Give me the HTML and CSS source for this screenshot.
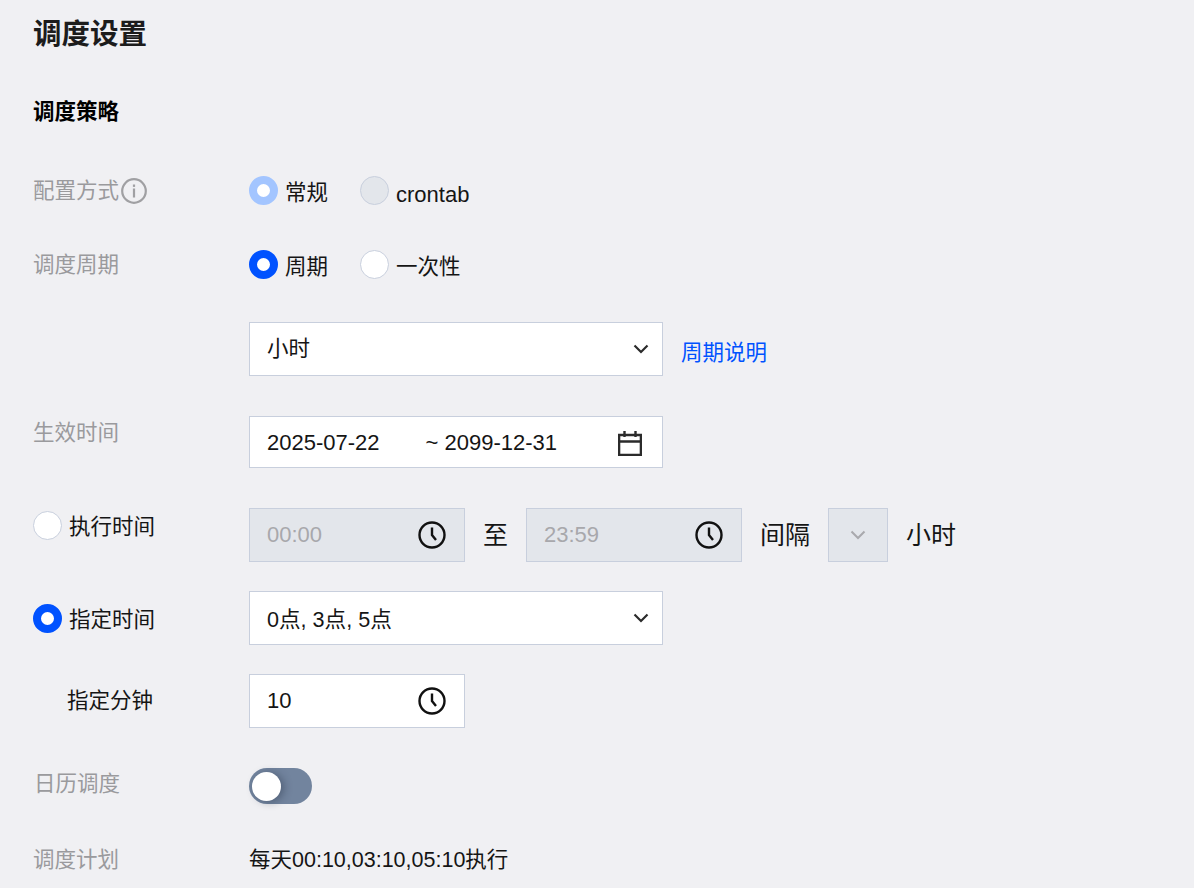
FILE: index.html
```html
<!DOCTYPE html>
<html lang="zh-CN">
<head>
<meta charset="utf-8">
<title>调度设置</title>
<link rel="stylesheet" href="styles.css">
</head>
<body>
<main class="page">
  <h1 class="title">调度设置</h1>
  <h2 class="section">调度策略</h2>

  <div class="row row-config">
    <div class="label muted">配置方式<svg class="info" width="26" height="26" viewBox="0 0 26 26"><circle cx="13" cy="13" r="11.8" fill="none" stroke="#a0a0a3" stroke-width="2.2"/><rect x="11.9" y="6.5" width="2.2" height="2.4" fill="#a0a0a3"/><rect x="11.9" y="10.5" width="2.2" height="9" fill="#a0a0a3"/></svg></div>
    <div class="radios">
      <span class="radio"><i class="dot dot-on-disabled"></i><span class="radio-text">常规</span></span>
      <span class="radio"><i class="dot dot-off-disabled"></i><span class="radio-text latin-low">crontab</span></span>
    </div>
  </div>

  <div class="row row-cycle">
    <div class="label muted">调度周期</div>
    <div class="radios">
      <span class="radio"><i class="dot dot-on"></i><span class="radio-text">周期</span></span>
      <span class="radio"><i class="dot dot-off"></i><span class="radio-text">一次性</span></span>
    </div>
  </div>

  <div class="row row-select">
    <div class="label"></div>
    <div class="field wide tall"><span class="text-up">小时</span><svg class="chev" width="16" height="10" viewBox="0 0 16 10"><path d="M1.5 1.5 8 8l6.5-6.5" fill="none" stroke="#2b2b2b" stroke-width="2.2"/></svg></div>
    <a class="link">周期说明</a>
  </div>

  <div class="row row-date">
    <div class="label muted">生效时间</div>
    <div class="field wide short">
      <span class="num date-from">2025-07-22</span><span class="num">~ 2099-12-31</span>
      <svg class="cal" width="24" height="26" viewBox="0 0 24 26"><path d="M1.100 5h21.800v20H1.100zM1.100 11.500h21.800M6.500 1v6M17.500 1v6" fill="none" stroke="#2b2b2b" stroke-width="2.400"/></svg>
    </div>
  </div>

  <div class="row row-exec">
    <div class="label"><i class="dot dot-off"></i><span class="label-text">执行时间</span></div>
    <div class="field narrow tall disabled"><span class="num">00:00</span><svg class="clock" width="28" height="28" viewBox="0 0 28 28"><circle cx="14" cy="14" r="12.500" fill="none" stroke="#111" stroke-width="2.400"/><path d="M14 6.500v7.500l4 5" fill="none" stroke="#111" stroke-width="2.400"/></svg></div>
    <span class="sep">至</span>
    <div class="field narrow tall disabled"><span class="num">23:59</span><svg class="clock" width="28" height="28" viewBox="0 0 28 28"><circle cx="14" cy="14" r="12.500" fill="none" stroke="#111" stroke-width="2.400"/><path d="M14 6.500v7.500l4 5" fill="none" stroke="#111" stroke-width="2.400"/></svg></div>
    <span class="sep">间隔</span>
    <div class="field mini tall disabled"><svg width="16" height="10" viewBox="0 0 16 10"><path d="M1.500 1.500 8 8l6.500-6.500" fill="none" stroke="#a9a9ad" stroke-width="2"/></svg></div>
    <span class="sep">小时</span>
  </div>

  <div class="row row-hours">
    <div class="label"><i class="dot dot-on"></i><span class="label-text">指定时间</span></div>
    <div class="field wide tall"><span class="text-up-1">0点, 3点, 5点</span><svg class="chev" width="16" height="10" viewBox="0 0 16 10"><path d="M1.500 1.500 8 8l6.500-6.500" fill="none" stroke="#2b2b2b" stroke-width="2.200"/></svg></div>
  </div>

  <div class="row row-min">
    <div class="label label-indent">指定分钟</div>
    <div class="field narrow tall"><span class="num">10</span><svg class="clock" width="28" height="28" viewBox="0 0 28 28"><circle cx="14" cy="14" r="12.500" fill="none" stroke="#111" stroke-width="2.400"/><path d="M14 6.500v7.500l4 5" fill="none" stroke="#111" stroke-width="2.400"/></svg></div>
  </div>

  <div class="row row-cal">
    <div class="label muted">日历调度</div>
    <div class="switch"><i class="knob"></i></div>
  </div>

  <div class="row row-plan">
    <div class="label muted">调度计划</div>
    <div class="plan">每天00:10,03:10,05:10执行</div>
  </div>
</main>
</body>
</html>
```

FILE: styles.css
```css
* { box-sizing: border-box; }
html, body { margin: 0; height: 100%; overflow: hidden; }
body {
  background: #f0f0f3;
  color: #151515;
  font-family: "Liberation Sans", "Noto Sans CJK SC", sans-serif;
  font-size: 21.5px;
}
.page { padding: 0 0 0 33px; }
.title { margin: 0; font-size: 28.5px; font-weight: 700; line-height: 68px; height: 68px; color: #1c1c1c; }
.section { margin: 24px 0 0; font-size: 21.5px; font-weight: 700; line-height: 40px; height: 40px; color: #000; }
.row { display: flex; align-items: center; }
.label { width: 216px; flex: none; display: flex; align-items: center; line-height: 30px; position: relative; }
.label-text { position: relative; }
.muted { color: #9a9a9d; }
.info { margin-left: 2px; }
.radios { display: flex; align-items: center; }
.radio { display: flex; align-items: center; margin-right: 32px; }
.radio-text { margin-left: 7px; }
.latin-low { position: relative; top: 5px; font-size: 22px; }
.dot { display: block; flex: none; width: 29px; height: 29px; border-radius: 50%; }
.dot-on { background: #fff; border: 8px solid #0052ff; }
.dot-on-disabled { background: #fff; border: 8px solid #a3c5ff; }
.dot-off { background: #fff; border: 1px solid #c8cfdd; }
.dot-off-disabled { background: #e3e6eb; border: 1px solid #c8cfdd; }
.row-exec .dot, .row-hours .dot { margin-right: 7px; }
.row-config { margin-top: 43px; height: 30px; }
.row-cycle { margin-top: 44px; height: 30px; }
.row-select { margin-top: 43px; }
.row-date { margin-top: 40px; }
.row-exec { margin-top: 40px; }
.row-hours { margin-top: 29px; }
.row-min { margin-top: 29px; }
.row-cal { margin-top: 40px; }
.row-plan { margin-top: 41px; }
.row-config .label, .row-cycle .label { top: 1px; }
.row-date .label { top: -9px; }
.row-cal .label { top: -2px; padding-left: 1px; }
.row-exec .label { top: -10px; }
.row-exec .label-text { top: 2px; }
.row-hours .label-text { top: 2px; }
.label-indent { padding-left: 34px; }
.field {
  display: flex; align-items: center; justify-content: space-between;
  flex: none; background: #fff; border: 1px solid #c8cfdd;
  padding: 0 17px;
}
.wide { width: 414px; }
.narrow { width: 216px; }
.mini { width: 60px; padding: 0; justify-content: center; }
.tall { height: 54px; }
.short { height: 52px; }
.disabled { background: #e3e6eb; color: #a8a8ac; }
.num { font-size: 22px; }
.text-up { position: relative; top: -3px; }
.text-up-1 { position: relative; top: -1px; font-size: 21.6px; }
.chev { margin-right: -4px; }
.clock { margin-right: 1px; }
.cal { margin-left: auto; margin-right: 3px; position: relative; top: 1px; }
.row-date .field .num { position: relative; top: 1px; }
.date-from { margin-right: 46px; }
.link { color: #0052ff; margin-left: 18px; position: relative; top: 1px; }
.sep { flex: none; font-size: 25px; margin: 0 18px; position: relative; top: -2px; }
.switch { width: 63px; height: 36px; border-radius: 18px; background: #72849e; padding: 3px; flex: none; }
.knob { display: block; width: 29px; height: 29px; margin-top: 0.500px; border-radius: 50%; background: #fff; box-shadow: 3px 1px 8px rgba(30,40,60,.4); }
.plan { color: #151515; font-size: 21.5px; line-height: 30px; }
```
